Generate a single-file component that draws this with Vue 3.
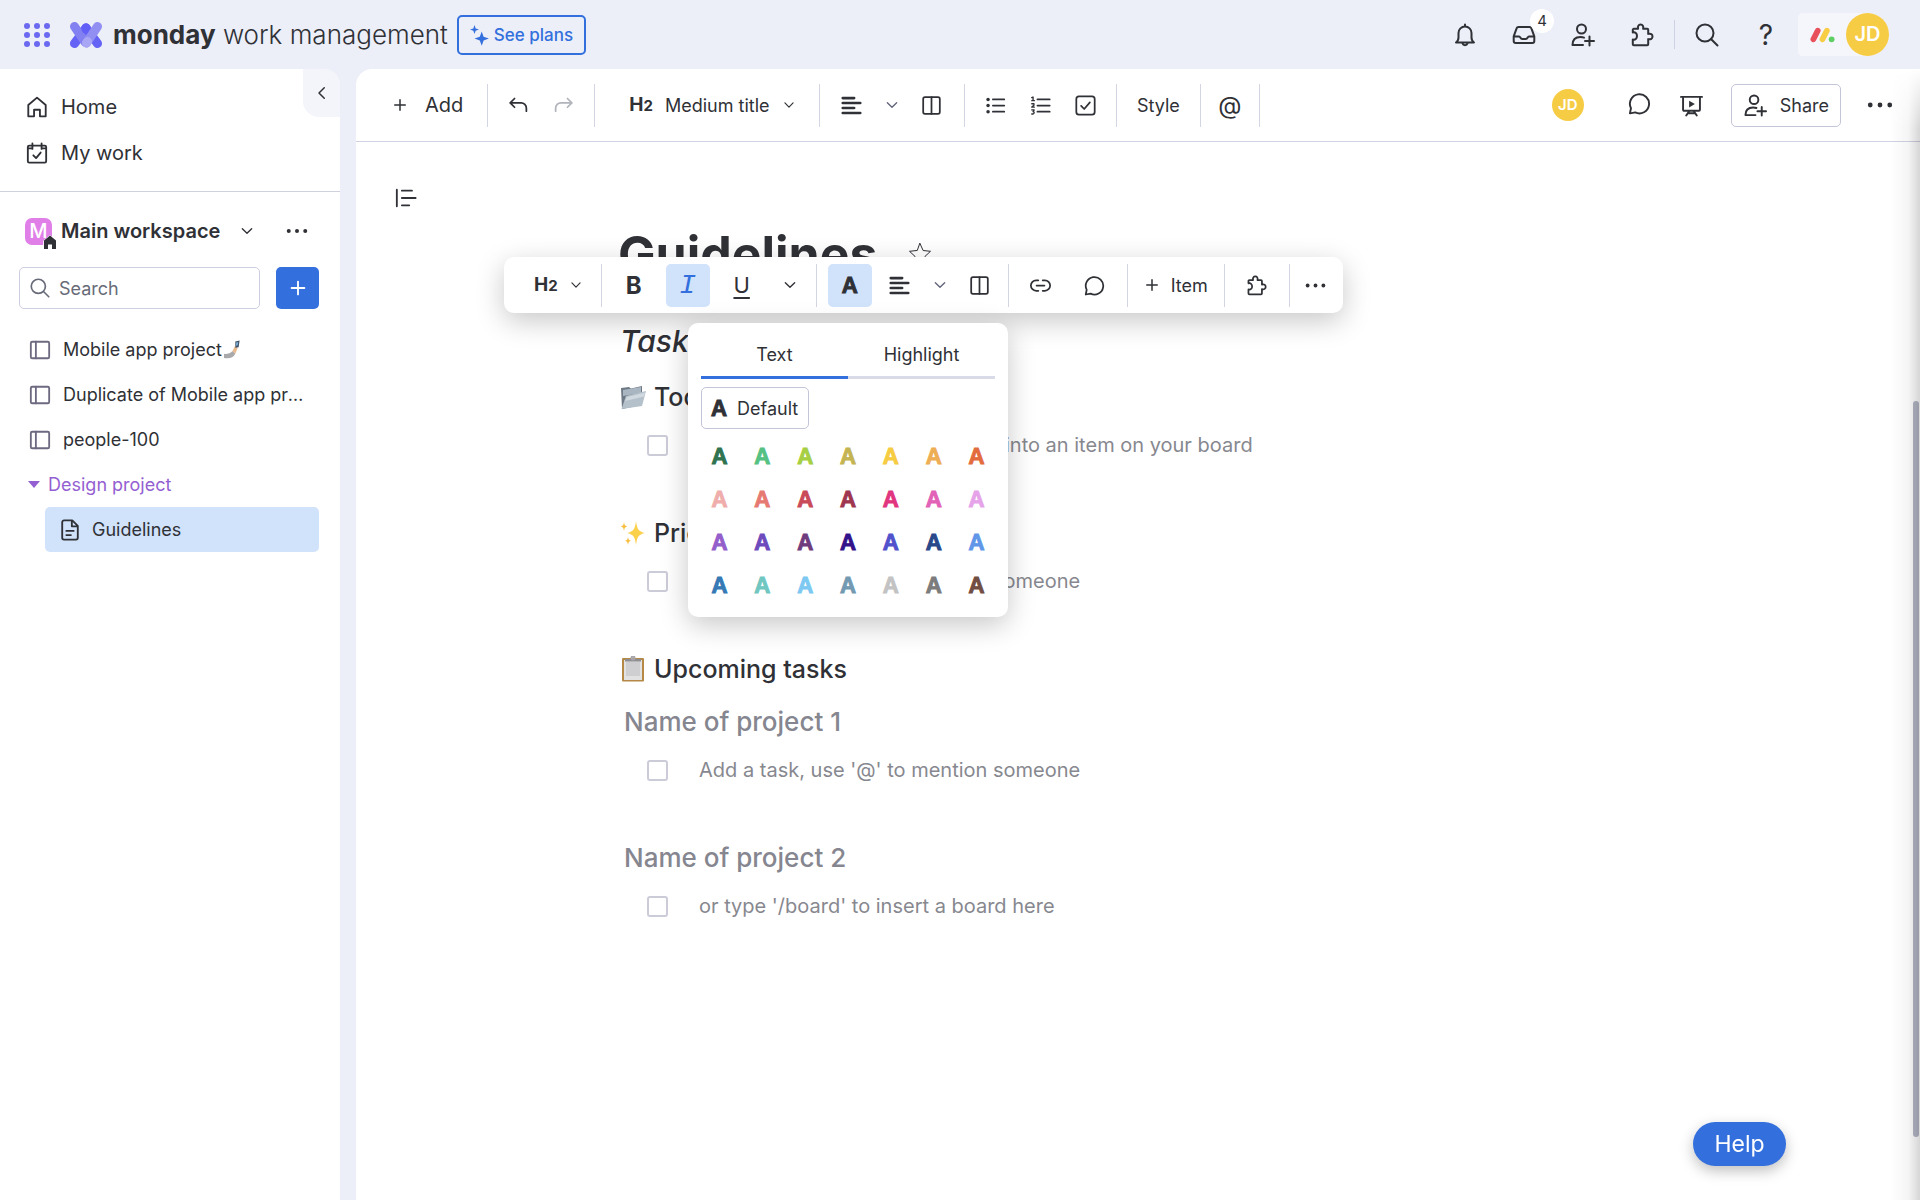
<template>
    <svg class="sprite" aria-hidden="true">
        <symbol id="i-plus" viewBox="0 0 24 24"><path d="M12 5v14M5 12h14" /></symbol>
        <symbol id="i-chevron" viewBox="0 0 24 24"><path d="M5 8.5l7 7 7-7" /></symbol>
        <symbol id="i-chevron-left" viewBox="0 0 24 24"><path d="M15 5l-7 7 7 7" /></symbol>
        <symbol id="i-bell" viewBox="0 0 24 24">
            <path d="M12 1.500v2M3 19.500c1.700-1.200 2.500-2.500 2.500-5v-4.500a6.500 6.500 0 0 1 13 0v4.500c0 2.500.8 3.800 2.500 5zM9.500 20.500c.4 1.200 1.300 1.800 2.500 1.800s2.100-.6 2.500-1.800" />
        </symbol>
        <symbol id="i-inbox" viewBox="0 0 24 24">
            <path d="M6.500 4h11a2 2 0 0 1 1.900 1.400l2.900 8V18a2 2 0 0 1-2 2H3.700a2 2 0 0 1-2-2v-4.600l2.900-8A2 2 0 0 1 6.500 4zM1.700 13.400h5.300c.9 0 1.100.6 1.500 1.400s.9 1.200 1.700 1.200h3.600c.8 0 1.300-.4 1.700-1.200s.6-1.400 1.500-1.400h5.300" />
        </symbol>
        <symbol id="i-invite" viewBox="0 0 24 24">
            <circle cx="10.500" cy="6" r="4.500" />
            <path d="M12 22H1.500c0-5.500 2.500-8 8-8 1.400 0 2.500.2 3.500.6M18.500 13.500v9M14 18h9" />
        </symbol>
        <symbol id="i-puzzle" viewBox="0 0 24 24">
            <path d="M2.800 9.500V6.800a1 1 0 0 1 1-1h4.300C7.400 3.200 8.600 1.500 10.600 1.500s3.200 1.700 2.500 4.300h4.100a1 1 0 0 1 1 1v4.100c2.600-.7 4.300.5 4.300 2.600s-1.700 3.300-4.300 2.600v5.100a1 1 0 0 1-1 1H3.800a1 1 0 0 1-1-1V16.500c2.500.7 4.200-1 4.200-3.500s-1.700-4.200-4.200-3.500z" />
        </symbol>
        <symbol id="i-search" viewBox="0 0 24 24">
            <circle cx="10" cy="10" r="8.500" /><path d="M16.200 16.200L22.500 22.500" />
        </symbol>
        <symbol id="i-home" viewBox="0 0 24 24">
            <path d="M2.500 9.800L12 1.800l9.500 8V22.200h-6.300v-7.200H8.800v7.200H2.500z" />
        </symbol>
        <symbol id="i-work" viewBox="0 0 24 24">
            <rect x="2" y="4" width="20" height="18.500" rx="1.500" />
            <path d="M7 1.500v6M17 1.500v6M2 7h5M17 7h5M8 14.500l3 3 5-6" />
        </symbol>
        <symbol id="i-board" viewBox="0 0 24 24">
            <rect x="2" y="3" width="20" height="18" rx="1.500" /><path d="M7.500 3v18" />
        </symbol>
        <symbol id="i-doc" viewBox="0 0 24 24">
            <path d="M3.500 3.500a2 2 0 0 1 2-2h9l6 6v13a2 2 0 0 1-2 2h-13a2 2 0 0 1-2-2zM14 2v6h6M8 13h8M8 17.500h5" />
        </symbol>
        <symbol id="i-dots" viewBox="0 0 24 24">
            <g fill="currentColor" stroke="none">
                <circle cx="3" cy="12" r="2.200" /><circle cx="12" cy="12" r="2.200" /><circle cx="21" cy="12" r="2.200" />
            </g>
        </symbol>
        <symbol id="i-undo" viewBox="0 0 24 24"><path d="M7.500 4L2.500 9l5 5M2.500 9H15a6 6 0 0 1 6 6v3.500" /></symbol>
        <symbol id="i-redo" viewBox="0 0 24 24"><path d="M16.500 4l5 5-5 5M21.500 9H9a6 6 0 0 0-6 6v3.500" /></symbol>
        <symbol id="i-align" viewBox="0 0 24 24"><path d="M2 3.500h13M2 9.200h20M2 14.800h13M2 20.500h20" /></symbol>
        <symbol id="i-columns" viewBox="0 0 24 24">
            <rect x="2.500" y="2.500" width="19" height="19" rx="2" /><path d="M12 2.500v19" />
        </symbol>
        <symbol id="i-bullets" viewBox="0 0 24 24">
            <path d="M9 5h13M9 12h13M9 19h13" />
            <g fill="currentColor" stroke="none">
                <circle cx="3.500" cy="5" r="2" /><circle cx="3.500" cy="12" r="2" /><circle cx="3.500" cy="19" r="2" />
            </g>
        </symbol>
        <symbol id="i-numbers" viewBox="0 0 24 24">
            <path d="M8.500 5h14M8.500 12h14M8.500 19h14" />
            <path d="M2 3l1.500-.7v4.200M2 6.500h3M2 10h2.500v1.800L2 13.800h3M2 17h2.800l-1.300 2c1.700 0 1.700 2.700-.2 2.700H2" stroke-width="1.500" />
        </symbol>
        <symbol id="i-check" viewBox="0 0 24 24">
            <rect x="1.500" y="1.500" width="21" height="21" rx="3" /><path d="M7 12.500l3.500 3.500 6.500-7.500" />
        </symbol>
        <symbol id="i-chat" viewBox="0 0 24 24">
            <path d="M2 22.300l1.100-5.400A10 10 0 1 1 7.600 21.300z" />
        </symbol>
        <symbol id="i-present" viewBox="0 0 24 24">
            <path d="M1 3h22M3.200 3v13.500a1 1 0 0 0 1 1h15.600a1 1 0 0 0 1-1V3M9.500 18l-3 4.500M14.500 18l3 4.500M8.500 20h7" />
            <path d="M9.500 7v7l6-3.500z" fill="currentColor" stroke="none" />
        </symbol>
        <symbol id="i-outline" viewBox="0 0 24 24"><path d="M2 3v18M7.500 4h11M7.500 12h15M7.500 20h8" /></symbol>
        <symbol id="i-link" viewBox="0 0 24 24">
            <path d="M9.500 18H7A6 6 0 0 1 7 6h2.500M14.500 6H17a6 6 0 0 1 0 12h-2.500M7.500 12h9" />
        </symbol>
        <symbol id="i-star" viewBox="0 0 24 24">
            <path d="M12 1.500l3.100 7 7.400.8-5.500 5.100 1.500 7.400L12 18l-6.500 3.800L7 14.400 1.500 9.300l7.400-.8z" />
        </symbol>
    </svg>

    <div class="app">
        <header class="topbar">
            <button class="icon-btn apps" aria-label="Products">
                <span v-for="n in 9" :key="n" class="dot"></span>
            </button>
            <a href="#" class="brand">
                <svg class="logo" viewBox="0 0 34 28" aria-hidden="true">
                    <g fill="none" stroke-width="9" stroke-linecap="round">
                        <path d="M17 7L28.500 22.500" stroke="#6562f6" />
                        <path d="M17 7L5.500 22.500" stroke="#6562f6" />
                        <path d="M5.500 5.500L16 21" stroke="#8381f1" />
                        <path d="M17 7v1" stroke="#625ff8" />
                        <path d="M28.500 5.500L17.500 22" stroke="#928ff2" />
                        <path d="M18.500 20.500L17.500 22" stroke="#a9a6f5" />
                    </g>
                </svg>
                <span class="brand-name"><b>monday</b> work management</span>
            </a>
            <button class="plans">
                <svg class="sparkle" viewBox="0 0 20 24" aria-hidden="true">
                    <path d="M5 1l1.300 3.700L10 6 6.300 7.300 5 11 3.700 7.300 0 6l3.700-1.300zM13 8l2.100 5.900L21 16l-5.900 2.100L13 24l-2.100-5.900L5 16l5.900-2.100z" />
                </svg>
                See plans
            </button>
            <nav class="top-actions">
                <button class="icon-btn" aria-label="Notifications"><svg><use href="#i-bell" /></svg></button>
                <button class="icon-btn" aria-label="Inbox">
                    <svg><use href="#i-inbox" /></svg><span class="badge">4</span>
                </button>
                <button class="icon-btn" aria-label="Invite members"><svg><use href="#i-invite" /></svg></button>
                <button class="icon-btn" aria-label="Apps"><svg><use href="#i-puzzle" /></svg></button>
                <span class="top-divider"></span>
                <button class="icon-btn" aria-label="Search everything"><svg><use href="#i-search" /></svg></button>
                <button class="icon-btn question">?</button>
            </nav>
            <button class="profile">
                <svg class="mini-logo" viewBox="0 0 26 16" aria-hidden="true">
                    <path d="M3.500 12.500L8 3.500" stroke="#e8505b" />
                    <path d="M13 12.500L17.500 3.500" stroke="#f7cd45" />
                    <circle cx="22.500" cy="12.500" r="3" />
                </svg>
                <span class="avatar large">JD</span>
            </button>
        </header>

        <div class="body">
            <aside class="sidebar">
                <button class="collapse" aria-label="Collapse sidebar"><svg><use href="#i-chevron-left" /></svg></button>
                <nav class="main-nav">
                    <a href="#"><svg><use href="#i-home" /></svg>Home</a>
                    <a href="#"><svg><use href="#i-work" /></svg>My work</a>
                </nav>
                <div class="workspace">
                    <span class="ws-icon">M
                        <svg viewBox="0 0 14 14" aria-hidden="true"><path d="M1 5.500L7 .5l6 5V14H9V9.500H5V14H1z" /></svg>
                    </span>
                    <span class="ws-name">Main workspace</span>
                    <button class="icon-btn ws-chevron" aria-label="Switch workspace"><svg><use href="#i-chevron" /></svg></button>
                    <button class="icon-btn ws-more" aria-label="Workspace options"><svg><use href="#i-dots" /></svg></button>
                </div>
                <div class="search-row">
                    <label class="search">
                        <svg><use href="#i-search" /></svg>
                        <input type="text" placeholder="Search" aria-label="Search" />
                    </label>
                    <button class="add-item" aria-label="Add item"><svg><use href="#i-plus" /></svg></button>
                </div>
                <nav class="boards">
                    <a v-for="board in boards" :key="board.name" href="#">
                        <svg class="board-icon"><use href="#i-board" /></svg>
                        <span class="board-name">{{ board.name }}</span>
                        <svg v-if="board.selfie" class="selfie" viewBox="0 0 18 20" role="img" aria-label="Selfie">
                            <path d="M0 14c3 .6 6 0 9-3l3 3c-2 4-6 5.500-12 4.500z" fill="#a9a9ab" />
                            <path d="M9 11l2.500-5 3 1.500L12 14z" fill="#e8b98c" />
                            <path d="M12 1l4.500-1-1 7-3.500.5z" fill="#41546b" />
                            <path d="M13 2l2-.5-.5 3.500-1.800.5z" fill="#7fb2d9" />
                        </svg>
                    </a>
                    <button class="folder"><span class="caret"></span>Design project</button>
                    <a href="#" class="active"><svg class="doc-icon"><use href="#i-doc" /></svg>Guidelines</a>
                </nav>
            </aside>

            <main class="content">
                <div class="toolbar">
                    <div class="group">
                        <button class="add"><svg><use href="#i-plus" /></svg>Add</button>
                    </div>
                    <div class="group wide">
                        <button class="tool" aria-label="Undo"><svg><use href="#i-undo" /></svg></button>
                        <button class="tool disabled" aria-label="Redo" disabled><svg><use href="#i-redo" /></svg></button>
                    </div>
                    <label class="group heading-select">
                        <span class="h2">H<small>2</small></span>
                        <select aria-label="Text style">
                            <option>Medium title</option>
                        </select>
                        <svg class="small-chevron"><use href="#i-chevron" /></svg>
                    </label>
                    <div class="group narrow">
                        <button class="tool bold-icon" aria-label="Align"><svg><use href="#i-align" /></svg></button>
                        <button class="tool soft" aria-label="Align options"><svg><use href="#i-chevron" /></svg></button>
                        <button class="tool" aria-label="Layout"><svg><use href="#i-columns" /></svg></button>
                    </div>
                    <div class="group wide">
                        <button class="tool" aria-label="Bulleted list"><svg><use href="#i-bullets" /></svg></button>
                        <button class="tool" aria-label="Numbered list"><svg><use href="#i-numbers" /></svg></button>
                        <button class="tool" aria-label="Checklist"><svg><use href="#i-check" /></svg></button>
                    </div>
                    <div class="group">
                        <button class="style-btn">Style</button>
                    </div>
                    <div class="group mention">
                        <button class="tool at">@</button>
                    </div>
                    <div class="doc-actions">
                        <span class="avatar">JD</span>
                        <button class="icon-btn chat" aria-label="Comments"><svg><use href="#i-chat" /></svg></button>
                        <button class="icon-btn present" aria-label="Present"><svg><use href="#i-present" /></svg></button>
                        <button class="share"><svg><use href="#i-invite" /></svg>Share</button>
                        <button class="icon-btn more" aria-label="More options"><svg><use href="#i-dots" /></svg></button>
                    </div>
                </div>

                <button class="icon-btn outline" aria-label="Table of contents"><svg><use href="#i-outline" /></svg></button>

                <article class="doc">
                    <div class="title-row">
                        <h1>Guidelines</h1>
                        <button class="icon-btn star" aria-label="Add to favorites"><svg><use href="#i-star" /></svg></button>
                    </div>
                    <h2 class="tagline">Tasks</h2>
                    <section v-for="section in sections" :key="section.title">
                        <h3>
                            <svg v-if="section.icon === 'folder'" class="emoji" viewBox="0 0 26 26" aria-hidden="true">
                                <path d="M1 4l8-1 2 1.500L22 2v19L2 25z" fill="#6d7a86" />
                                <path d="M3 6l18-3v6L3 12z" fill="#a9b6c1" />
                                <path d="M6 12l20-5-4 15L1.500 25z" fill="#b4c0ca" />
                                <path d="M7 13l18-4.500-1 4L5 17z" fill="#d0d9e0" />
                            </svg>
                            <svg v-else-if="section.icon === 'sparkles'" class="emoji" viewBox="0 0 26 26" aria-hidden="true">
                                <path d="M16 1c1 8 2.500 10.500 9 12-6.500 1.500-8 4-9 12-1-8-2.500-10.500-9-12 6.500-1.500 8-4 9-12z" fill="#fbd04b" />
                                <path d="M4 2c.4 3 1 4 3.500 4.500C5 7 4.400 8 4 11c-.4-3-1-4-3.500-4.500C3 6 3.600 5 4 2zM8 17c.4 2.500 1 3.300 3 3.700-2 .4-2.600 1.500-3 4-.4-2.500-1-3.600-3-4 2-.4 2.600-1.200 3-3.700z" fill="#f6bf3d" />
                            </svg>
                            <svg v-else class="emoji" viewBox="0 0 26 26" aria-hidden="true">
                                <rect x="2" y="2" width="22" height="23.500" rx="1" fill="#b58846" />
                                <rect x="4" y="4" width="18" height="20" fill="#e2e2e2" />
                                <rect x="6" y="6" width="14" height="14" fill="#cfcfd1" />
                                <path d="M5 3h16v2.500H5z" fill="#8d8d92" />
                                <circle cx="13" cy="2" r="1.500" fill="none" stroke="#a5a5aa" />
                            </svg>
                            {{ section.title }}
                        </h3>
                        <div v-for="item in section.items" :key="item.hint" class="block">
                            <h4 v-if="item.heading">{{ item.heading }}</h4>
                            <label class="task"><input type="checkbox" />{{ item.hint }}</label>
                        </div>
                    </section>

                    <div class="float-bar">
                        <div class="group">
                            <button class="h2-btn"><span class="h2">H<small>2</small></span><svg class="small-chevron"><use href="#i-chevron" /></svg></button>
                        </div>
                        <div class="group spaced">
                            <button class="tool letter">B</button>
                            <button class="tool selected italic">I</button>
                            <button class="tool underline">U</button>
                            <button class="tool slim" aria-label="More formats"><svg><use href="#i-chevron" /></svg></button>
                        </div>
                        <div class="group narrow">
                            <button class="tool selected color-btn"><span class="a">A</span></button>
                            <button class="tool bold-icon" aria-label="Align text"><svg><use href="#i-align" /></svg></button>
                            <button class="tool soft" aria-label="Align text options"><svg><use href="#i-chevron" /></svg></button>
                            <button class="tool" aria-label="Columns"><svg><use href="#i-columns" /></svg></button>
                        </div>
                        <div class="group spaced">
                            <button class="tool" aria-label="Link"><svg><use href="#i-link" /></svg></button>
                            <button class="tool" aria-label="Comment"><svg><use href="#i-chat" /></svg></button>
                        </div>
                        <div class="group">
                            <button class="item-btn"><svg><use href="#i-plus" /></svg>Item</button>
                        </div>
                        <div class="group spaced">
                            <button class="tool" aria-label="Apps"><svg><use href="#i-puzzle" /></svg></button>
                        </div>
                        <div class="group last">
                            <button class="tool" aria-label="More"><svg><use href="#i-dots" /></svg></button>
                        </div>

                        <div class="palette">
                            <div class="tabs" role="tablist">
                                <button
                                    v-for="tab in tabs"
                                    :key="tab"
                                    role="tab"
                                    :class="{ current: tab === activeTab }"
                                    @click="activeTab = tab"
                                >{{ tab }}</button>
                            </div>
                            <button class="default"><span class="a">A</span>Default</button>
                            <div class="swatches">
                                <button v-for="color in colors" :key="color" class="a" :style="{ color }">A</button>
                            </div>
                        </div>
                    </div>
                </article>
                <div class="scroll-thumb"></div>
            </main>
        </div>
        <button class="help">Help</button>
    </div>
</template>

<script setup>
import { ref } from "vue";

const boards = [
    { name: "Mobile app project", selfie: true },
    { name: "Duplicate of Mobile app project" },
    { name: "people-100" },
];

const sections = [
    {
        icon: "folder",
        title: "Today",
        items: [{ hint: "Add a task, then select to turn it into an item on your board" }],
    },
    {
        icon: "sparkles",
        title: "Priorities",
        items: [{ hint: "Add a task, use '@' to mention someone" }],
    },
    {
        icon: "clipboard",
        title: "Upcoming tasks",
        items: [
            { heading: "Name of project 1", hint: "Add a task, use '@' to mention someone" },
            { heading: "Name of project 2", hint: "or type '/board' to insert a board here" },
        ],
    },
];

const tabs = ["Text", "Highlight"];
const activeTab = ref("Text");

const colors = [
    "#2f7350", "#55c182", "#a6cf43", "#c5b452", "#f6cc43", "#eeae55", "#e36c3e",
    "#efaeac", "#e67a72", "#c94a58", "#9f3650", "#e1367f", "#e262b8", "#e6a3e9",
    "#945ecb", "#6d4bbd", "#6f3c7e", "#33128a", "#5252cc", "#28488a", "#6196e8",
    "#3579b5", "#70c7c1", "#7dc9f2", "#739ab2", "#c3c3c3", "#7c7c7c", "#714d42",
];
</script>

<style>
body {
    margin: 0;
    background: #eceef8;
}
</style>

<style scoped>
.app {
    min-height: 100vh;
    display: flex;
    flex-direction: column;
    background: #eceef8;
    color: #2f3136;
    font-family: Inter, "Noto Sans", sans-serif;
    font-size: 18px;
}

.sprite {
    position: absolute;
    width: 0;
    height: 0;
}

svg {
    width: 22px;
    height: 22px;
    flex-shrink: 0;
    fill: none;
    stroke: currentColor;
    stroke-width: 2;
    stroke-linecap: round;
    stroke-linejoin: round;
}

button,
select,
input {
    font: inherit;
    color: inherit;
}

button {
    display: flex;
    align-items: center;
    justify-content: center;
    padding: 0;
    border: none;
    background: none;
    cursor: pointer;
}

a {
    color: inherit;
    text-decoration: none;
}

/* top bar */
.topbar {
    height: 69px;
    display: flex;
    align-items: center;
    padding: 0 31px 0 24px;
    box-sizing: border-box;
}

.icon-btn {
    position: relative;
    width: 44px;
    height: 44px;
}

.apps {
    width: 26px;
    height: 24px;
    display: grid;
    grid-template-columns: repeat(3, 6px);
    justify-content: space-between;
    align-content: space-between;
}

.dot {
    width: 6px;
    height: 6px;
    border-radius: 50%;
    background: #6b69f0;
}

.brand {
    display: flex;
    align-items: center;
    margin-left: 19px;
}

.logo {
    width: 34px;
    height: 28px;
}

.brand-name {
    margin-left: 10px;
    font-size: 26px;
    font-weight: 300;
    white-space: nowrap;
}

.brand-name b {
    font-weight: 700;
}

.plans {
    height: 40px;
    gap: 6px;
    margin-left: 9px;
    padding: 0 11px;
    border: 2px solid #3370dd;
    border-radius: 5px;
    color: #3370dd;
    font-size: 17px;
    font-weight: 500;
    white-space: nowrap;
}

.sparkle {
    width: 18px;
    fill: currentColor;
    stroke: none;
    overflow: visible;
}

.top-actions {
    display: flex;
    align-items: center;
    gap: 15px;
    margin-left: auto;
}

.top-divider {
    width: 1px;
    height: 29px;
    margin: 0 -5px;
    background: #cdd2e2;
}

.top-actions svg {
    width: 24px;
    height: 24px;
}

.badge {
    position: absolute;
    top: -4px;
    left: 28px;
    width: 24px;
    height: 24px;
    border-radius: 50%;
    background: #fff;
    font-size: 15px;
    line-height: 24px;
}

.question {
    font-size: 28px;
}

.profile {
    gap: 11px;
    height: 43px;
    margin-left: 10px;
    padding-left: 12px;
    border-radius: 5px 24px 24px 5px;
    background: #f5f6fc;
}

.mini-logo {
    width: 25px;
    height: 16px;
    stroke-width: 6;
}

.mini-logo circle {
    fill: #5fcf64;
    stroke: none;
}

.avatar {
    width: 32px;
    height: 32px;
    border-radius: 50%;
    background: #f7cc45;
    color: #fff;
    font-size: 15px;
    font-weight: 600;
    line-height: 32px;
    text-align: center;
}

.avatar.large {
    width: 43px;
    height: 43px;
    font-size: 20px;
    line-height: 43px;
}

/* sidebar */
.body {
    flex: 1;
    display: flex;
    gap: 16px;
}

.sidebar {
    position: relative;
    width: 340px;
    flex-shrink: 0;
    background: #fff;
    border-top-right-radius: 16px;
}

.collapse {
    position: absolute;
    top: 0;
    right: 0;
    width: 37px;
    height: 48px;
    border-radius: 0 16px 0 16px;
    background: #f4f5fb;
}

.collapse svg {
    width: 18px;
    height: 18px;
}

.main-nav {
    padding: 15px 26px;
    border-bottom: 1px solid #cfd1df;
}

.main-nav a {
    height: 46px;
    display: flex;
    align-items: center;
    gap: 13px;
    font-size: 20px;
}

.workspace {
    display: flex;
    align-items: center;
    height: 44px;
    margin: 17px 21px 0 25px;
}

.ws-icon {
    position: relative;
    width: 27px;
    height: 27px;
    border-radius: 7px;
    background: #e07fe8;
    color: #fff;
    font-size: 20px;
    font-weight: 500;
    line-height: 27px;
    text-align: center;
}

.ws-icon svg {
    position: absolute;
    right: -5px;
    bottom: -4px;
    width: 14px;
    height: 14px;
    fill: #2f3136;
    stroke: #fff;
    stroke-width: 1;
    paint-order: stroke;
    overflow: visible;
}

.ws-name {
    margin-left: 9px;
    font-size: 20px;
    font-weight: 600;
    white-space: nowrap;
}

.ws-chevron {
    margin-left: auto;
    width: 30px;
}

.ws-chevron svg {
    width: 16px;
    height: 16px;
}

.ws-more {
    margin-left: 13px;
}

.search-row {
    display: flex;
    gap: 16px;
    margin: 14px 21px 0 19px;
}

.search {
    flex: 1;
    min-width: 0;
    height: 42px;
    box-sizing: border-box;
    display: flex;
    align-items: center;
    gap: 9px;
    padding: 0 10px;
    border: 1px solid #cccfde;
    border-radius: 5px;
    color: #676b78;
}

.search svg {
    width: 20px;
    height: 20px;
}

.search input {
    flex: 1;
    min-width: 0;
    border: none;
    outline: none;
    padding: 0;
    background: none;
}

.search input::placeholder {
    color: #676b78;
    opacity: 1;
}

.add-item {
    width: 43px;
    height: 42px;
    border-radius: 5px;
    background: #3370dd;
    color: #fff;
}

.boards {
    margin: 18px 21px 0 28px;
}

.boards a,
.folder {
    height: 45px;
    display: flex;
    align-items: center;
}

.board-icon {
    width: 24px;
    margin-right: 11px;
    color: #6c6a80;
}

.board-name {
    overflow: hidden;
    text-overflow: ellipsis;
    white-space: nowrap;
    margin-right: 2px;
    line-height: 27px;
}

.boards a:nth-child(2) .board-name {
    margin-right: 14px;
}

.selfie {
    width: 17px;
    height: 20px;
    stroke: none;
}

.folder {
    gap: 8px;
    color: #945fd2;
}

.caret {
    border: 6px solid transparent;
    border-top: 7px solid #945fd2;
    border-bottom: 0;
}

.boards .active {
    margin-left: 17px;
    padding-left: 14px;
    gap: 11px;
    border-radius: 5px;
    background: #d1e2fb;
}

/* document toolbar */
.content {
    position: relative;
    flex: 1;
    min-width: 0;
    background: #fff;
    border-top-left-radius: 16px;
}

.content::after {
    content: "";
    position: absolute;
    inset: 0 0 0 auto;
    width: 30px;
    background: linear-gradient(to right, transparent, rgba(0, 0, 0, 0.04) 60%, rgba(0, 0, 0, 0.16));
    mask-image: linear-gradient(transparent, #000 60px);
    pointer-events: none;
}

.toolbar {
    height: 72px;
    display: flex;
    align-items: center;
    border-bottom: 1px solid #d0d1e2;
}

.group {
    height: 43px;
    display: flex;
    align-items: center;
    box-sizing: border-box;
    border-right: 1px solid #d3d5e3;
}

.tool {
    width: 40px;
    height: 43px;
    border-radius: 5px;
}

.tool svg {
    width: 21px;
    height: 21px;
}

.tool.soft svg,
.tool.slim svg {
    width: 16px;
    height: 16px;
}

.tool.soft {
    color: #62657a;
}

.tool.bold-icon svg {
    stroke-width: 3;
}

.disabled {
    color: #b2b4bc;
}

.wide {
    padding: 0 8px;
}

.wide .tool {
    width: 45px;
}

.narrow {
    padding: 0 12px;
}

.add {
    gap: 16px;
    padding: 0 24px 0 35px;
    font-size: 20px;
}

.add svg,
.item-btn svg {
    width: 18px;
    height: 18px;
}

.heading-select {
    gap: 12px;
    padding: 0 23px 0 34px;
}

.heading-select select {
    appearance: none;
    border: none;
    outline: none;
    padding: 0;
    background: none;
    font-size: 18px;
}

.h2 {
    font-size: 19px;
    font-weight: 700;
    line-height: 22px;
}

.h2 small {
    font-size: 15px;
}

.small-chevron {
    width: 14px;
    height: 14px;
}

.style-btn {
    padding: 0 20px;
}

.mention {
    padding: 0 9px;
}

.at {
    font-size: 24px;
}

.doc-actions {
    display: flex;
    align-items: center;
    margin-left: auto;
    padding-right: 18px;
}

.doc-actions svg {
    width: 23px;
    height: 23px;
}

.chat {
    margin: -4px 8px 0 34px;
}

.share {
    height: 43px;
    gap: 13px;
    margin: 0 17px;
    padding: 0 11px 0 12px;
    border: 1px solid #c3c5d8;
    border-radius: 5px;
}

.share + .more svg {
    width: 26px;
    height: 26px;
}

/* document */
.outline {
    position: absolute;
    top: 107px;
    left: 28px;
}

.doc {
    position: relative;
    max-width: 1040px;
    margin: 0 auto;
    padding: 79px 0 120px;
}

.title-row {
    display: flex;
    align-items: center;
    gap: 20px;
    height: 66px;
}

h1,
h2,
h3,
h4 {
    margin: 0;
    font-weight: 500;
}

h1 {
    font-size: 50px;
    font-weight: 700;
    line-height: 66px;
}

.star svg {
    width: 24px;
    height: 24px;
    stroke-width: 1;
}

.tagline {
    height: 60px;
    margin-top: 26px;
    padding-left: 2px;
    font-size: 30px;
    font-style: italic;
    line-height: 56px;
}

h3 {
    display: flex;
    align-items: center;
    gap: 8px;
    height: 48px;
    font-size: 25px;
}

.emoji {
    width: 26px;
    height: 26px;
    margin-left: 2px;
    stroke: none;
}

h4 {
    height: 48px;
    padding: 5px 0 0 6px;
    color: #85868f;
    font-size: 26px;
    line-height: 48px;
}

.block {
    margin-bottom: 40px;
}

.block + .block h4 {
    padding-top: 0;
}

.task {
    display: flex;
    align-items: center;
    height: 48px;
    gap: 31px;
    padding-left: 29px;
    color: #87888f;
    font-size: 20px;
    white-space: nowrap;
}

.task input {
    appearance: none;
    width: 21px;
    height: 21px;
    margin: 0;
    border: 2px solid #cbccd8;
    border-radius: 3px;
}

/* floating format bar */
.float-bar {
    position: absolute;
    top: 115px;
    left: -114px;
    display: flex;
    align-items: center;
    height: 56px;
    border-radius: 10px;
    background: #fff;
    box-shadow: 0 8px 28px rgba(0, 0, 0, 0.22);
}

.h2-btn {
    gap: 11px;
    padding: 0 18px 0 30px;
}

.spaced {
    gap: 10px;
    padding: 0 10px;
}

.spaced .tool {
    width: 44px;
}

.spaced .slim {
    width: 32px;
}

.float-bar .narrow {
    padding: 0 8px 0 11px;
}

.selected,
.spaced .selected {
    width: 44px;
    background: #d1e2fb;
}

.color-btn {
    margin-right: 8px;
}

.letter {
    font-size: 24px;
    font-weight: 700;
}

.italic {
    color: #3370dd;
    font-family: "Liberation Mono", monospace;
    font-size: 28px;
    font-style: italic;
}

.underline {
    font-size: 22px;
    text-decoration: underline;
    text-underline-offset: 4px;
}

.item-btn {
    gap: 10px;
    padding: 0 16px 0 15px;
}

.last {
    padding: 0 5px 0 4px;
    border-right: none;
}

.last .tool {
    width: 44px;
}

.a {
    font-size: 22px;
    font-weight: 600;
    -webkit-text-stroke: 1px currentColor;
}

/* color palette */
.palette {
    position: absolute;
    top: 66px;
    left: 184px;
    width: 320px;
    box-sizing: border-box;
    padding: 12px 10px 11px;
    border-radius: 10px;
    background: #fff;
    box-shadow: 0 8px 28px rgba(0, 0, 0, 0.22);
}

.tabs {
    display: flex;
    margin: 0 3px;
}

.tabs button {
    flex: 1;
    height: 44px;
    padding-bottom: 2px;
    border-bottom: 3px solid #d9dbe8;
}

.tabs .current {
    border-bottom-color: #3370dd;
}

.default {
    height: 42px;
    gap: 10px;
    margin: 8px 3px 5px;
    padding: 0 10px 0 9px;
    border: 1px solid #c3c5d8;
    border-radius: 5px;
}

.swatches {
    display: grid;
    grid-template-columns: repeat(7, 1fr);
}

.swatches button {
    height: 43px;
}

.scroll-thumb {
    position: absolute;
    top: 332px;
    right: 1px;
    width: 6px;
    height: 736px;
    border-radius: 3px;
    background: #b4b7c6;
}

.help {
    position: fixed;
    right: 134px;
    bottom: 34px;
    width: 93px;
    height: 44px;
    border-radius: 22px;
    background: #3370dd;
    color: #fff;
    font-size: 23px;
    box-shadow: 0 5px 14px rgba(0, 0, 0, 0.25);
}
</style>
